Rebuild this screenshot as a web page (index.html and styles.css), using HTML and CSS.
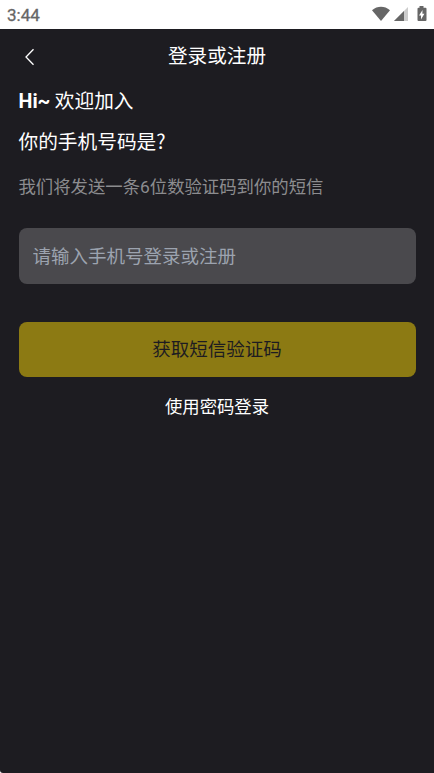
FILE: index.html
```html
<!DOCTYPE html>
<html lang="zh-CN">
<head>
<meta charset="utf-8">
<title>登录或注册</title>
<link rel="stylesheet" href="styles.css">
</head>
<body>
<div class="status">
  <span class="clock">3:44</span>
  <svg class="status-icons" width="58" height="20" viewBox="0 0 58 20">
    <path d="M0 4.2C5.500-.3 12.500-.3 18 4.2L9 15Z"/>
    <path class="faint" d="M22 15L36 1v14Z"/>
    <path d="M22 15L32 5v10Z"/>
    <path d="M47.500 0h4v1.800h2q1 0 1 1v11.200q0 1-1 1h-7q-1 0-1-1v-11.200q0-1 1-1h1Z"/>
    <path class="bolt" d="M50.500 4L47 9.500h2V13.500l3.400-5.700h-2Z"/>
  </svg>
</div>
<main class="screen">
  <header class="bar">
    <svg class="back" width="12" height="18" viewBox="0 0 12 18"><path d="M9.500 1.300L2 9l7.500 7.700"/></svg>
    <h1 class="title">登录或注册</h1>
  </header>
  <p class="hello"><b>Hi~</b> 欢迎加入</p>
  <p class="question">你的手机号码是?</p>
  <p class="hint">我们将发送一条<span class="digit">6</span>位数验证码到你的短信</p>
  <input class="phone" type="tel" placeholder="请输入手机号登录或注册">
  <button class="submit">获取短信验证码</button>
  <a class="password">使用密码登录</a>
</main>
</body>
</html>
```
FILE: styles.css
```css
* { box-sizing: border-box; margin: 0; padding: 0; }
body {
  height: 773px;
  display: flex;
  flex-direction: column;
  overflow: hidden;
  background: #fff;
  font-family: "Noto Sans CJK SC", sans-serif;
  color: #fff;
}
.status {
  height: 29px;
  display: flex;
  justify-content: space-between;
  padding: 6px 4px 0 7px;
}
.clock { font-family: Roboto, sans-serif; font-size: 17px; line-height: 19px; color: #666; -webkit-text-stroke: .3px #666; }
.status-icons { fill: #666; }
.status-icons .faint { fill: #ccc; }
.status-icons .bolt { fill: #fff; }
.screen {
  flex: 1;
  display: flex;
  flex-direction: column;
  padding: 0 18.500px;
  background: #1d1c21;
  border-bottom-left-radius: 3px;
}
.bar { height: 56px; display: grid; grid-template-columns: 22px 1fr 22px; align-items: center; }
.back { fill: none; stroke: #fff; stroke-width: 1.300; margin-left: 5.500px; }
.title { font-size: 19.600px; font-weight: 400; line-height: 28px; text-align: center; padding-bottom: 4px; }
.hello, .question { font-size: 19.700px; line-height: 30px; }
.hello b { font-family: Roboto, sans-serif; line-height: 1; }
.question { margin-top: 11px; }
.hint { margin-top: 17px; font-size: 17.360px; line-height: 26px; color: #8c8c8f; white-space: nowrap; }
.digit { font-family: Roboto, sans-serif; line-height: 1; }
.phone {
  height: 56px;
  margin-top: 29px;
  padding: 0 14px 3px;
  border: 0;
  border-radius: 8px;
  background: #4a494d;
  font: 18.500px "Noto Sans CJK SC", sans-serif;
  color: #fff;
}
.phone::placeholder { color: #9ca3af; }
.submit {
  height: 55px;
  margin-top: 38px;
  padding-bottom: 4px;
  border: 0;
  border-radius: 8px;
  background: #8c7a13;
  font: 18.500px "Noto Sans CJK SC", sans-serif;
  color: #1d1c21;
}
.password { margin-top: 16px; font-size: 17.360px; line-height: 26px; text-align: center; }
```
